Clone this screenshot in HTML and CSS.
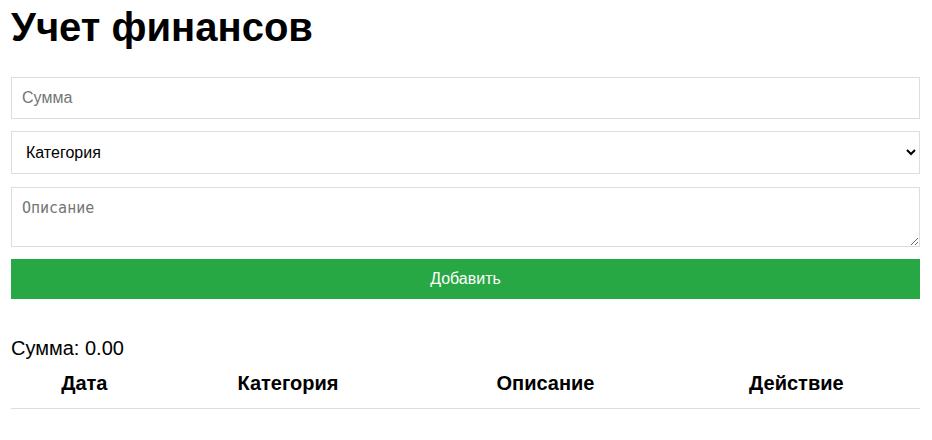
FILE: index.html
```html
<!DOCTYPE html>
<html lang="ru">
<head>
<meta charset="utf-8">
<title>Учет финансов</title>
<link rel="stylesheet" href="styles.css">
</head>
<body>
<div class="app">
  <h1 class="title">Учет финансов</h1>
  <form class="form">
    <input class="field" type="number" placeholder="Сумма">
    <select class="field select">
      <option>Категория</option>
    </select>
    <textarea class="field area" placeholder="Описание"></textarea>
    <button class="btn" type="button">Добавить</button>
  </form>
  <div class="total">Сумма: 0.00</div>
  <table class="table">
    <thead>
      <tr><th>Дата</th><th>Категория</th><th>Описание</th><th>Действие</th></tr>
    </thead>
    <tbody></tbody>
  </table>
</div>
</body>
</html>
```
FILE: styles.css
```css
html, body {
  margin: 0;
  padding: 0;
  background: #fff;
}
body {
  font-family: "Liberation Sans", Arial, sans-serif;
  color: #000;
}
.app {
  padding: 0 12px 0 11px;
}
.title {
  font-size: 40px;
  font-weight: bold;
  margin: 0;
  padding-top: 2px;
  line-height: 50px;
}
.form {
  display: flex;
  flex-direction: column;
  margin-top: 25px;
}
.field {
  box-sizing: border-box;
  width: 100%;
  border: 1px solid #ddd;
  border-radius: 0;
  background: #fff;
  font-family: "Liberation Sans", Arial, sans-serif;
  font-size: 16px;
  padding: 10px;
  height: 42px;
  margin: 0 0 12px;
  outline: none;
}
.field::placeholder {
  color: #757575;
}
.select {
  height: 43px;
  color: #000;
  margin-bottom: 13px;
}
.area {
  height: 60px;
  font-family: "DejaVu Sans Mono", monospace;
  font-size: 15px;
  padding: 11px 10px 9px;
  resize: vertical;
}
.btn {
  height: 40px;
  border: 0;
  background: #28a745;
  color: #fff;
  font-family: "Liberation Sans", Arial, sans-serif;
  font-size: 16px;
  cursor: pointer;
}
.total {
  font-size: 20px;
  margin-top: 37px;
  line-height: 24px;
}
.table {
  width: 100%;
  border-collapse: collapse;
  margin-top: 4px;
}
.table th {
  font-size: 20px;
  line-height: 23px;
  font-weight: bold;
  padding: 8px 12px 13px;
  border-bottom: 1px solid #ddd;
  text-align: center;
}
```
